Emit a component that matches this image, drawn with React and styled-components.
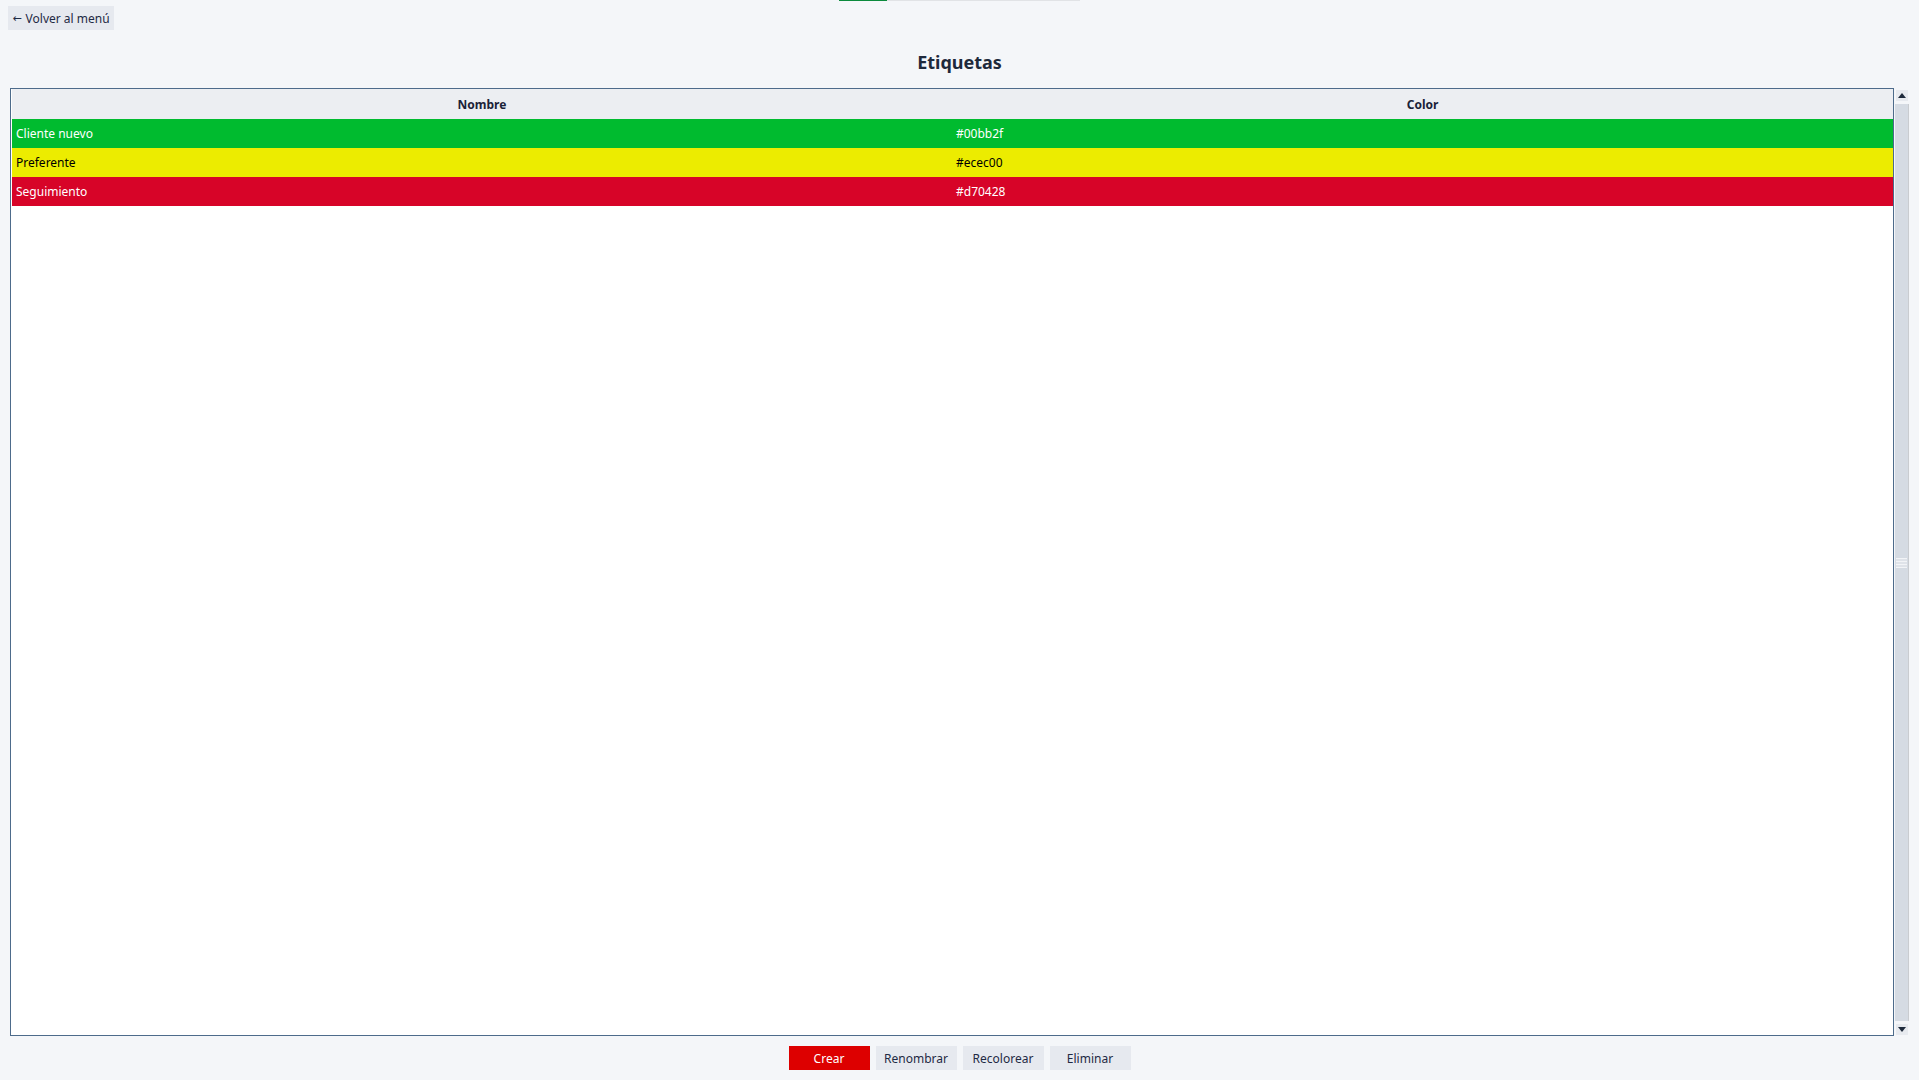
import React from "react";
import styled, { createGlobalStyle } from "styled-components";

const Global = createGlobalStyle`
  html, body { margin: 0; padding: 0; background: #f4f6f9; }
  body { font-family: "Noto Sans", "Open Sans", "DejaVu Sans", sans-serif; color: #1f2937; }
  #root { min-height: 100vh; }
`;

const Page = styled.div`
  height: 100vh;
  display: flex;
  flex-direction: column;
  box-sizing: border-box;
`;

const Progress = styled.div`
  align-self: center;
  width: 241px;
  height: 1px;
  background: #e1e3e6;
  display: flex;
`;

const ProgressFill = styled.div`
  height: 100%;
  background: #0b8a3c;
`;

const TopRow = styled.div`
  display: flex;
  padding: 5px 8px 0;
`;

const BackButton = styled.button`
  border: none;
  background: #e6e9ef;
  color: #1f2a44;
  font: 12px "Noto Sans", "Open Sans", sans-serif;
  height: 24px;
  width: 106px;
  padding: 0 2px;
  display: flex;
  align-items: center;
  justify-content: center;
  gap: 4px;
  cursor: pointer;
`;

const BackArrow = styled.span`
  font-family: "DejaVu Sans", sans-serif;
  font-size: 11px;
`;

const Title = styled.h1`
  margin: 20px 0 14px;
  height: 24px;
  line-height: 24px;
  text-align: center;
  font-size: 18px;
  font-weight: 700;
  color: #1e293b;
`;

const TableArea = styled.div`
  flex: 1;
  min-height: 0;
  display: flex;
  gap: 1px;
  padding: 0 10px;
`;

const Frame = styled.div`
  flex: 1;
  border: 1px solid #4d6b8b;
  background: #ffffff;
  padding: 0 0 0 1px;
  display: flex;
  flex-direction: column;
  overflow: hidden;
`;

const Grid = styled.div`
  display: grid;
  grid-template-columns: 940px 1fr;
`;

const HeadCell = styled.div`
  height: 30px;
  background: #eceef2;
  font-size: 12px;
  font-weight: 700;
  color: #1a2238;
  display: flex;
  align-items: center;
  justify-content: center;
`;

const Cell = styled.div`
  height: 29px;
  background: ${(p) => p.$bg};
  color: ${(p) => p.$fg};
  font-size: 12px;
  display: flex;
  align-items: center;
  padding-left: 4px;
`;

const Scroll = styled.div`
  width: 14px;
  display: flex;
  flex-direction: column;
  gap: 2px;
  padding-top: 1px;
`;

const Arrow = styled.div`
  height: 13px;
  background: #e7eaef;
  border: 1px solid #f4f6f9;
  box-sizing: border-box;
  display: flex;
  align-items: center;
  justify-content: center;
  &::after {
    content: "";
    width: 0;
    height: 0;
    border-left: 4px solid transparent;
    border-right: 4px solid transparent;
    ${(p) => (p.$down ? "border-top: 5px solid #1e2a3c;" : "border-bottom: 5px solid #1e2a3c;")}
  }
`;

const Track = styled.div`
  flex: 1;
  background: #d5dbe3;
  border-right: 1px solid #c9ccd0;
  display: flex;
  align-items: center;
  justify-content: center;
`;

const Grip = styled.div`
  width: 11px;
  height: 10px;
  background: repeating-linear-gradient(
    to bottom,
    #f2f4f7 0px,
    #f2f4f7 1px,
    #dfe3e9 1px,
    #dfe3e9 3px
  );
`;

const Actions = styled.div`
  display: flex;
  justify-content: center;
  gap: 6px;
  padding: 10px 0 10px;
`;

const ActionButton = styled.button`
  width: 81px;
  height: 24px;
  border: none;
  background: ${(p) => (p.$primary ? "#dd0000" : "#e6e9ef")};
  color: ${(p) => (p.$primary ? "#ffffff" : "#1f2a44")};
  font: 12px "Noto Sans", "Open Sans", sans-serif;
  cursor: pointer;
`;

const rows = [
  { name: "Cliente nuevo", color: "#00bb2f", fg: "#ffffff" },
  { name: "Preferente", color: "#ecec00", fg: "#000000" },
  { name: "Seguimiento", color: "#d70428", fg: "#ffffff" },
];

export default function App() {
  return (
    <Page>
      <Global />
      <Progress>
        <ProgressFill style={{ width: "20%" }} />
      </Progress>
      <TopRow>
        <BackButton>
          <BackArrow>←</BackArrow>Volver al menú
        </BackButton>
      </TopRow>
      <Title>Etiquetas</Title>
      <TableArea>
        <Frame>
          <Grid>
            <HeadCell>Nombre</HeadCell>
            <HeadCell>Color</HeadCell>
            {rows.map((r) => (
              <React.Fragment key={r.name}>
                <Cell $bg={r.color} $fg={r.fg}>{r.name}</Cell>
                <Cell $bg={r.color} $fg={r.fg}>{r.color}</Cell>
              </React.Fragment>
            ))}
          </Grid>
        </Frame>
        <Scroll>
          <Arrow />
          <Track>
            <Grip />
          </Track>
          <Arrow $down />
        </Scroll>
      </TableArea>
      <Actions>
        <ActionButton $primary>Crear</ActionButton>
        <ActionButton>Renombrar</ActionButton>
        <ActionButton>Recolorear</ActionButton>
        <ActionButton>Eliminar</ActionButton>
      </Actions>
    </Page>
  );
}
